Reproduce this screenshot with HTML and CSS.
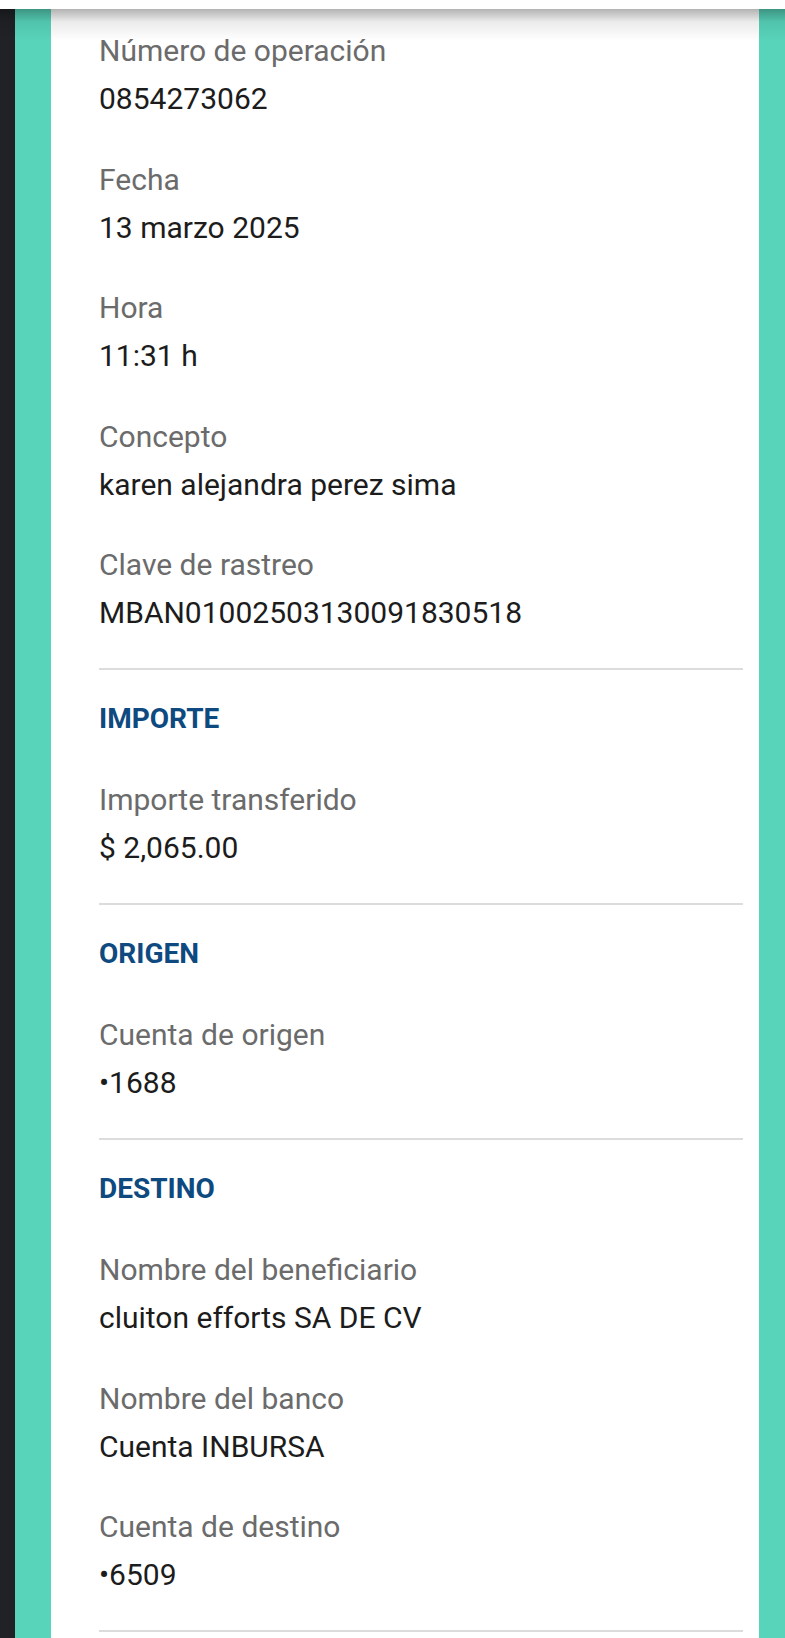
FILE: index.html
```html
<!DOCTYPE html>
<html>
<head>
	<meta charset="utf-8">
	<title>Comprobante</title>
	<link rel="stylesheet" href="styles.css">
</head>
<body>
	<div class="barra"></div>
	<div class="pantalla">
		<div class="borde"></div>
		<div class="riel"></div>
		<div class="hoja">
			<div class="grupo primero">
				<div class="dato">
					<div class="etiqueta">Número de operación</div>
					<div class="valor">0854273062</div>
				</div>
				<div class="dato">
					<div class="etiqueta">Fecha</div>
					<div class="valor">13 marzo 2025</div>
				</div>
				<div class="dato">
					<div class="etiqueta">Hora</div>
					<div class="valor">11:31 h</div>
				</div>
				<div class="dato">
					<div class="etiqueta">Concepto</div>
					<div class="valor">karen alejandra perez sima</div>
				</div>
				<div class="dato">
					<div class="etiqueta">Clave de rastreo</div>
					<div class="valor">MBAN01002503130091830518</div>
				</div>
			</div>

			<div class="grupo seccion">
				<h3>IMPORTE</h3>
				<div class="dato">
					<div class="etiqueta">Importe transferido</div>
					<div class="valor">$ 2,065.00</div>
				</div>
			</div>

			<div class="grupo seccion">
				<h3>ORIGEN</h3>
				<div class="dato">
					<div class="etiqueta">Cuenta de origen</div>
					<div class="valor">•1688</div>
				</div>
			</div>

			<div class="grupo seccion">
				<h3>DESTINO</h3>
				<div class="dato">
					<div class="etiqueta">Nombre del beneficiario</div>
					<div class="valor">cluiton efforts SA DE CV</div>
				</div>
				<div class="dato">
					<div class="etiqueta">Nombre del banco</div>
					<div class="valor">Cuenta INBURSA</div>
				</div>
				<div class="dato">
					<div class="etiqueta">Cuenta de destino</div>
					<div class="valor">•6509</div>
				</div>
			</div>

			<div class="grupo seccion"></div>
		</div>
		<div class="riel derecho"></div>
	</div>
</body>
</html>
```

FILE: styles.css
```css
html, body {
	margin: 0;
	height: 100%;
}

body {
	font-family: Roboto, "Liberation Sans", Arial, sans-serif;
	background-color: #fff;
	overflow: hidden;
}

.barra {
	height: 9px;
	background-color: #fff;
	position: relative;
	z-index: 2;
}

/* sombra de la barra superior */
.barra::after {
	content: "";
	position: absolute;
	left: 0;
	right: 0;
	top: 9px;
	height: 32px;
	background: linear-gradient(rgba(0,0,0,0.30), rgba(0,0,0,0.08) 40%, rgba(0,0,0,0));
}

.pantalla {
	display: flex;
	height: calc(100% - 9px);
}

.borde {
	width: 15px;
	background-color: #202226;
}

.riel {
	width: 36px;
	background-color: #58d4bb;
}

.riel.derecho {
	width: 26px;
}

.hoja {
	flex: 1;
	background-color: #fff;
	padding: 22px 16px 0 48px;
}

.grupo {
	padding-bottom: 35px;
}

.seccion {
	border-top: 2px solid #dcdcdc;
	padding-top: 31px;
}

h3 {
	margin: 0 0 43px 0;
	font-size: 28px;
	line-height: 36px;
	font-weight: bold;
	color: #0e4a7f;
}

.dato + .dato {
	margin-top: 40.5px;
}

.etiqueta {
	font-size: 30px;
	line-height: 40px;
	color: #6b6b6b;
	margin-bottom: 8px;
}

.valor {
	font-size: 30px;
	line-height: 40px;
	color: #1c1c1c;
}
```
